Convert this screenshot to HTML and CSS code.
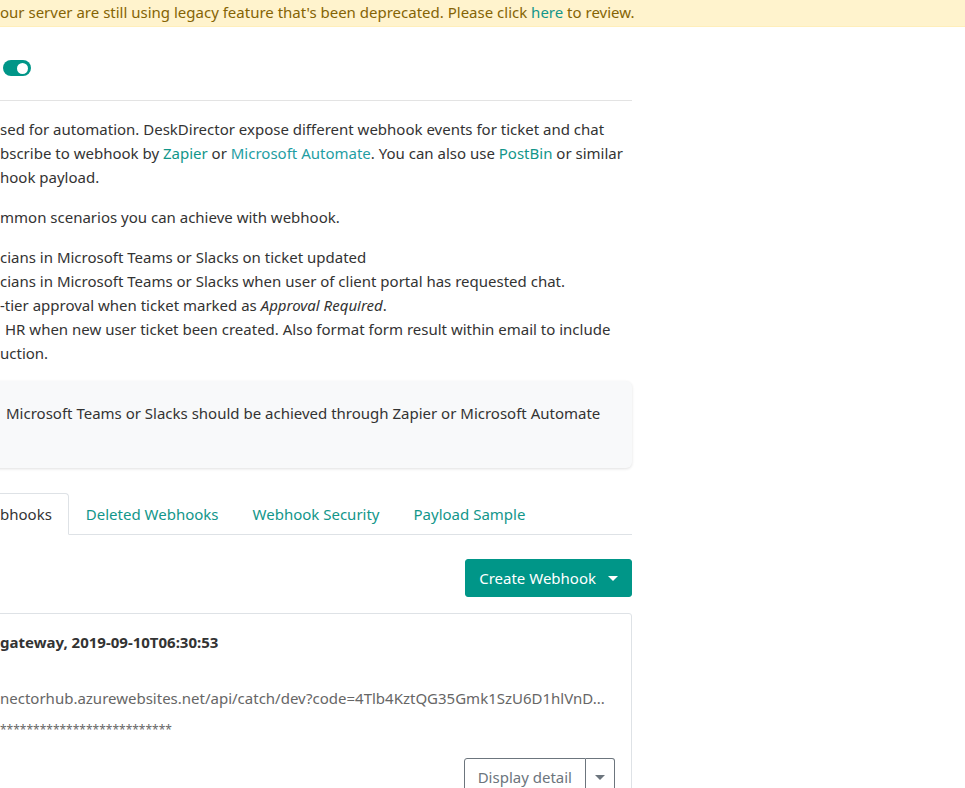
FILE: index.html
```html
<!DOCTYPE html>
<html lang="en">

<head>
    <meta charset="UTF-8">
    <meta name="viewport" content="width=device-width, initial-scale=1.0">
    <title>Webhooks</title>

    <link rel="stylesheet" href="styles.css">
</head>

<body>

    <div class="banner">
        our server are still using legacy feature that's been deprecated. Please click <a href="#">here</a> to review.
    </div>

    <main class="content">

        <div class="form-row">
            <span class="switch on"><span class="knob"></span></span>
        </div>

        <hr>

        <p>
            sed for automation. DeskDirector expose different webhook events for ticket and chat<br>
            bscribe to webhook by <a href="#">Zapier</a> or <a href="#" class="visited">Microsoft Automate</a>. You can also use <a href="#">PostBin</a> or similar<br>
            hook payload.
        </p>

        <p>mmon scenarios you can achieve with webhook.</p>

        <ul class="scenarios">
            <li>cians in Microsoft Teams or Slacks on ticket updated</li>
            <li>cians in Microsoft Teams or Slacks when user of client portal has requested chat.</li>
            <li>-tier approval when ticket marked as <em>Approval Required</em>.</li>
            <li class="indent">HR when new user ticket been created. Also format form result within email to include<br>
                <span class="outdent">uction.</span></li>
        </ul>

        <div class="note">
            <p>Microsoft Teams or Slacks should be achieved through Zapier or Microsoft Automate</p>
        </div>

        <ul class="tabs">
            <li class="tab active">bhooks</li>
            <li class="tab">Deleted Webhooks</li>
            <li class="tab">Webhook Security</li>
            <li class="tab">Payload Sample</li>
        </ul>

        <div class="toolbar">
            <button class="btn btn-primary">Create Webhook <span class="caret"></span></button>
        </div>

        <div class="card">
            <div class="card-title">gateway, 2019-09-10T06:30:53</div>
            <div class="field">nectorhub.azurewebsites.net/api/catch/dev?code=4Tlb4KztQG35Gmk1SzU6D1hlVnD...</div>
            <div class="field secret">**************************</div>
            <div class="card-actions">
                <div class="btn-group">
                    <button class="btn btn-outline">Display detail</button>
                    <button class="btn btn-outline split"><span class="caret"></span></button>
                </div>
            </div>
        </div>

    </main>

</body>

</html>
```
FILE: styles.css
```css
body {
    margin: 0;
    font-family: "Noto Sans", sans-serif;
    font-size: 15px;
    line-height: 24px;
    color: #333;
    background-color: #fff;
    overflow: hidden;
}

a {
    color: #12968a;
    text-decoration: none;
}

a.visited {
    color: #1f9ea3;
}

.banner {
    background-color: #fff3cd;
    border-bottom: 1px solid #ffeeba;
    color: #856404;
    padding-bottom: 2px;
    white-space: nowrap;
}

.content {
    width: 632px;
    padding-top: 29px;
}

.form-row {
    display: flex;
    align-items: center;
    height: 24px;
    padding-left: 3px;
}

.switch {
    width: 28px;
    height: 16px;
    border-radius: 8px;
    background-color: #009688;
    display: flex;
    align-items: center;
    justify-content: flex-end;
    padding: 0 3px;
    box-sizing: border-box;
}

.switch .knob {
    width: 11px;
    height: 11px;
    border-radius: 50%;
    background-color: #fff;
}

hr {
    border: 0;
    border-top: 1px solid #e3e3e3;
    margin: 20px 0 16px;
}

p {
    margin: 0 0 16px;
    white-space: nowrap;
}

.scenarios {
    list-style: none;
    margin: 0 0 16px;
    padding: 0;
    white-space: nowrap;
}

.scenarios .indent {
    padding-left: 5px;
}

.scenarios .outdent {
    margin-left: -5px;
}

.note {
    background-color: #f8f9fa;
    border-radius: 6px;
    box-shadow: 0 1px 3px rgba(0, 0, 0, 0.12);
    margin-left: -20px;
    padding: 20px 20px 27px 26px;
}

.tabs {
    display: flex;
    list-style: none;
    margin: 25px 0 0 -17px;
    padding: 0;
    border-bottom: 1px solid #dee2e6;
}

.tab {
    padding: 8px 16px;
    border: 1px solid transparent;
    border-radius: 4px 4px 0 0;
    margin-bottom: -1px;
    color: #12968a;
}

.tab.active {
    color: #333;
    border-color: #dee2e6 #dee2e6 #fff;
    background-color: #fff;
}

.toolbar {
    display: flex;
    justify-content: flex-end;
    margin: 24px 0 16px;
}

.btn {
    font-family: inherit;
    font-size: 15px;
    line-height: 24px;
    padding: 6px 13px;
    border-radius: 3px;
    border: 1px solid transparent;
    display: inline-flex;
    align-items: center;
}

.btn-primary {
    background-color: #009688;
    border-color: #009688;
    color: #fff;
}

.caret {
    display: inline-block;
    width: 0;
    height: 0;
    border-top: 5px solid currentColor;
    border-left: 5px solid transparent;
    border-right: 5px solid transparent;
    margin-left: 12px;
}

.card {
    border: 1px solid #dee2e6;
    border-radius: 3px;
    margin-left: -17px;
    padding: 16px;
}

.card-title {
    font-weight: 700;
    margin-bottom: 32px;
}

.field {
    color: #666;
    white-space: nowrap;
}

.secret {
    font-size: 12px;
    margin-top: 8px;
}

.card-actions {
    display: flex;
    justify-content: flex-end;
    margin-top: 16px;
}

.btn-group {
    display: flex;
}

.btn-outline {
    background-color: #fff;
    border-color: #6c757d;
    color: #6c757d;
}

.btn-group .btn-outline:first-child {
    border-radius: 3px 0 0 3px;
}

.btn-outline.split {
    border-left: 0;
    border-radius: 0 3px 3px 0;
    padding: 6px 9px;
}

.btn-outline.split .caret {
    margin-left: 0;
}
```
